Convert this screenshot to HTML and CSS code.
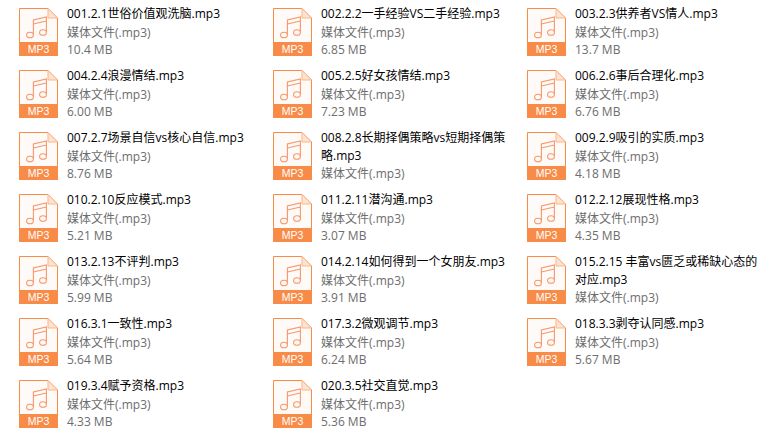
FILE: index.html
```html
<!DOCTYPE html>
<html lang="zh-CN">
<head>
  <meta charset="UTF-8" />
  <title>MP3 files</title>
  <link rel="stylesheet" href="styles.css">
</head>
<body>

<svg class="defs" width="0" height="0">
  <symbol id="mp3" viewBox="0 0 39 34">
    <path d="M.5 34V.5H29L38.5 10V34" fill="#fefaf7" stroke="#f78b47"/>
    <path d="M29 .5V10H38.5Z" fill="#fde3d1" stroke="#f9b78c"/>
    <g fill="none" stroke="#f9976a" stroke-width="1.1">
      <ellipse cx="11" cy="27" rx="3.4" ry="2.8"/>
      <ellipse cx="24" cy="24.5" rx="3.4" ry="2.8"/>
      <path d="M14.4 26.5V12L27.4 9V24M14.4 16L27.4 13"/>
    </g>
  </symbol>
</svg>

<div class="grid">
  <div class="file">
    <div class="icon"><svg><use href="#mp3"/></svg><span>MP3</span></div>
    <div class="info"><div class="name">001.2.1世俗价值观洗脑.mp3</div><div class="meta">媒体文件(.mp3)</div><div class="meta">10.4 MB</div></div>
  </div>
  <div class="file">
    <div class="icon"><svg><use href="#mp3"/></svg><span>MP3</span></div>
    <div class="info"><div class="name">002.2.2一手经验VS二手经验.mp3</div><div class="meta">媒体文件(.mp3)</div><div class="meta">6.85 MB</div></div>
  </div>
  <div class="file">
    <div class="icon"><svg><use href="#mp3"/></svg><span>MP3</span></div>
    <div class="info"><div class="name">003.2.3供养者VS情人.mp3</div><div class="meta">媒体文件(.mp3)</div><div class="meta">13.7 MB</div></div>
  </div>

  <div class="file">
    <div class="icon"><svg><use href="#mp3"/></svg><span>MP3</span></div>
    <div class="info"><div class="name">004.2.4浪漫情结.mp3</div><div class="meta">媒体文件(.mp3)</div><div class="meta">6.00 MB</div></div>
  </div>
  <div class="file">
    <div class="icon"><svg><use href="#mp3"/></svg><span>MP3</span></div>
    <div class="info"><div class="name">005.2.5好女孩情结.mp3</div><div class="meta">媒体文件(.mp3)</div><div class="meta">7.23 MB</div></div>
  </div>
  <div class="file">
    <div class="icon"><svg><use href="#mp3"/></svg><span>MP3</span></div>
    <div class="info"><div class="name">006.2.6事后合理化.mp3</div><div class="meta">媒体文件(.mp3)</div><div class="meta">6.76 MB</div></div>
  </div>

  <div class="file">
    <div class="icon"><svg><use href="#mp3"/></svg><span>MP3</span></div>
    <div class="info"><div class="name">007.2.7场景自信vs核心自信.mp3</div><div class="meta">媒体文件(.mp3)</div><div class="meta">8.76 MB</div></div>
  </div>
  <div class="file">
    <div class="icon"><svg><use href="#mp3"/></svg><span>MP3</span></div>
    <div class="info"><div class="name">008.2.8长期择偶策略vs短期择偶策略.mp3</div><div class="meta">媒体文件(.mp3)</div></div>
  </div>
  <div class="file">
    <div class="icon"><svg><use href="#mp3"/></svg><span>MP3</span></div>
    <div class="info"><div class="name">009.2.9吸引的实质.mp3</div><div class="meta">媒体文件(.mp3)</div><div class="meta">4.18 MB</div></div>
  </div>

  <div class="file">
    <div class="icon"><svg><use href="#mp3"/></svg><span>MP3</span></div>
    <div class="info"><div class="name">010.2.10反应模式.mp3</div><div class="meta">媒体文件(.mp3)</div><div class="meta">5.21 MB</div></div>
  </div>
  <div class="file">
    <div class="icon"><svg><use href="#mp3"/></svg><span>MP3</span></div>
    <div class="info"><div class="name">011.2.11潜沟通.mp3</div><div class="meta">媒体文件(.mp3)</div><div class="meta">3.07 MB</div></div>
  </div>
  <div class="file">
    <div class="icon"><svg><use href="#mp3"/></svg><span>MP3</span></div>
    <div class="info"><div class="name">012.2.12展现性格.mp3</div><div class="meta">媒体文件(.mp3)</div><div class="meta">4.35 MB</div></div>
  </div>

  <div class="file">
    <div class="icon"><svg><use href="#mp3"/></svg><span>MP3</span></div>
    <div class="info"><div class="name">013.2.13不评判.mp3</div><div class="meta">媒体文件(.mp3)</div><div class="meta">5.99 MB</div></div>
  </div>
  <div class="file">
    <div class="icon"><svg><use href="#mp3"/></svg><span>MP3</span></div>
    <div class="info"><div class="name">014.2.14如何得到一个女朋友.mp3</div><div class="meta">媒体文件(.mp3)</div><div class="meta">3.91 MB</div></div>
  </div>
  <div class="file">
    <div class="icon"><svg><use href="#mp3"/></svg><span>MP3</span></div>
    <div class="info"><div class="name">015.2.15 丰富vs匮乏或稀缺心态的对应.mp3</div><div class="meta">媒体文件(.mp3)</div></div>
  </div>

  <div class="file">
    <div class="icon"><svg><use href="#mp3"/></svg><span>MP3</span></div>
    <div class="info"><div class="name">016.3.1一致性.mp3</div><div class="meta">媒体文件(.mp3)</div><div class="meta">5.64 MB</div></div>
  </div>
  <div class="file">
    <div class="icon"><svg><use href="#mp3"/></svg><span>MP3</span></div>
    <div class="info"><div class="name">017.3.2微观调节.mp3</div><div class="meta">媒体文件(.mp3)</div><div class="meta">6.24 MB</div></div>
  </div>
  <div class="file">
    <div class="icon"><svg><use href="#mp3"/></svg><span>MP3</span></div>
    <div class="info"><div class="name">018.3.3剥夺认同感.mp3</div><div class="meta">媒体文件(.mp3)</div><div class="meta">5.67 MB</div></div>
  </div>

  <div class="file">
    <div class="icon"><svg><use href="#mp3"/></svg><span>MP3</span></div>
    <div class="info"><div class="name">019.3.4赋予资格.mp3</div><div class="meta">媒体文件(.mp3)</div><div class="meta">4.33 MB</div></div>
  </div>
  <div class="file">
    <div class="icon"><svg><use href="#mp3"/></svg><span>MP3</span></div>
    <div class="info"><div class="name">020.3.5社交直觉.mp3</div><div class="meta">媒体文件(.mp3)</div><div class="meta">5.36 MB</div></div>
  </div>
</div>

</body>
</html>
```

FILE: styles.css
```css
body {
  margin: 0;
  background: #fff;
  font-family: "Open Sans", "Noto Sans CJK SC", sans-serif;
  font-size: 12px;
  overflow: hidden;
}
.defs {
  display: block;
}
.grid {
  display: grid;
  grid-template-columns: repeat(3, 254px);
  grid-auto-rows: 62px;
  padding: 8px 0 0 19px;
}
.file {
  display: flex;
}
.icon {
  width: 39px;
  height: 48px;
  flex: none;
}
.icon svg {
  display: block;
  width: 39px;
  height: 34px;
}
.icon span {
  display: block;
  height: 14px;
  background: #f78b47;
  color: #fff;
  font-family: "Liberation Sans", sans-serif;
  font-size: 10.5px;
  line-height: 15px;
  text-align: center;
}
.info {
  width: 192px;
  margin: -3px 0 0 9px;
  line-height: 17.5px;
}
.name {
  margin-bottom: 1px;
  color: #000;
  word-break: break-all;
}
.meta {
  color: #6d6d6d;
}
```
